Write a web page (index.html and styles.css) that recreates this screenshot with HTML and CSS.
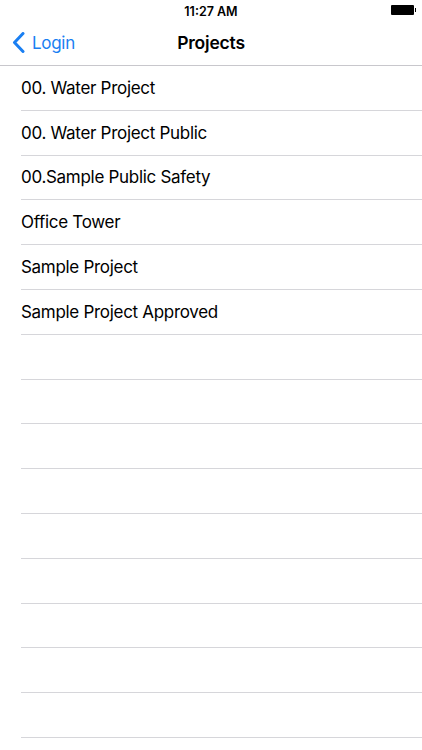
FILE: index.html
```html
<!DOCTYPE html>
<html lang="en">
<head>
  <meta charset="UTF-8">
  <meta name="viewport" content="width=device-width, initial-scale=1.0">
  <title>Projects</title>
  <link rel="stylesheet" href="styles.css">
</head>
<body>
  <div class="status-bar">
    <span class="time">11:27 AM</span>
    <span class="battery"><span class="battery-body"></span><span class="battery-nub"></span></span>
  </div>

  <div class="nav-bar">
    <a class="back" href="#">
      <svg class="chevron" width="13" height="21" viewBox="0 0 13 21">
        <path d="M11 1.5 L2.5 10.5 L11 19.5" fill="none" stroke="currentColor" stroke-width="3" stroke-linecap="round" stroke-linejoin="round"/>
      </svg>
      <span>Login</span>
    </a>
    <div class="title">Projects</div>
  </div>

  <ul class="project-list">
    <li>00. Water Project</li>
    <li>00. Water Project Public</li>
    <li>00.Sample Public Safety</li>
    <li>Office Tower</li>
    <li>Sample Project</li>
    <li>Sample Project Approved</li>
    <li></li>
    <li></li>
    <li></li>
    <li></li>
    <li></li>
    <li></li>
    <li></li>
    <li></li>
    <li></li>
  </ul>
</body>
</html>
```

FILE: styles.css
```css
body {
  margin: 0;
  font-family: Inter, "Liberation Sans", sans-serif;
  background-color: #fff;
  color: #000;
  overflow: hidden;
}

.status-bar {
  position: relative;
  height: 20px;
  display: flex;
  align-items: center;
  justify-content: center;
}

.time {
  font-size: 12.5px;
  font-weight: 600;
  padding-top: 2px;
}

.battery {
  position: absolute;
  top: 5px;
  right: 6px;
  display: flex;
  align-items: center;
}

.battery-body {
  width: 23px;
  height: 10px;
  background-color: #000;
  border-radius: 1px;
}

.battery-nub {
  width: 1.5px;
  height: 4px;
  background-color: #000;
  margin-left: 1px;
}

.nav-bar {
  position: relative;
  height: 45px;
  display: flex;
  align-items: center;
  justify-content: center;
  border-bottom: 1px solid #c8c7cc;
}

.title {
  font-size: 17.5px;
  font-weight: 600;
  letter-spacing: -0.2px;
}

.back {
  position: absolute;
  left: 12px;
  top: 0;
  bottom: 0;
  display: flex;
  align-items: center;
  color: #1a7ff2;
  text-decoration: none;
  font-size: 17px;
  letter-spacing: -0.3px;
}

.chevron {
  margin-right: 7px;
}

.project-list {
  list-style: none;
  margin: 0;
  padding: 0;
}

.project-list li {
  box-sizing: border-box;
  height: 44.8px;
  margin-left: 21px;
  display: flex;
  align-items: center;
  border-bottom: 1px solid #d6d6da;
  font-size: 17px;
  letter-spacing: -0.3px;
}
```
